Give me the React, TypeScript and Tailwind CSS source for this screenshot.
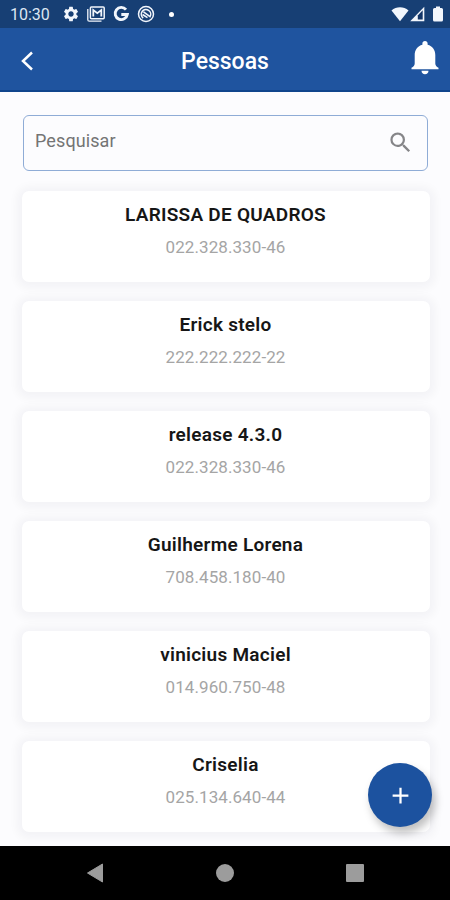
import type { ReactNode } from 'react'
import { MdOutlineAdd, MdSearch, MdSettings } from 'react-icons/md'

type Person = {
  name: string
  document: string
}

const PEOPLE: Person[] = [
  { name: 'LARISSA DE QUADROS', document: '022.328.330-46' },
  { name: 'Erick stelo', document: '222.222.222-22' },
  { name: 'release 4.3.0', document: '022.328.330-46' },
  { name: 'Guilherme Lorena', document: '708.458.180-40' },
  { name: 'vinicius Maciel', document: '014.960.750-48' },
  { name: 'Criselia', document: '025.134.640-44' },
]

const StatusIcon = ({ children }: { children: ReactNode }) => (
  <svg viewBox="0 0 18 18" className="size-[18px]" fill="none">
    {children}
  </svg>
)

const StatusBar = () => (
  <div className="flex h-7 shrink-0 items-center justify-between bg-[#173f74] pl-[10px] pr-[7px] text-[#f2f6fc]">
    <div className="flex items-center">
      <span className="w-[52px] pt-0.5 text-[16px] leading-7 text-[#dce6f3]">
        10:30
      </span>
      <MdSettings className="size-[18px]" />
      <div className="ml-[7px] flex items-center gap-[7px]">
        <StatusIcon>
          <path
            d="M.8 4v10.700c0 1 .5 1.500 1.500 1.500H14.500"
            stroke="currentColor"
            strokeWidth="1.300"
          />
          <rect
            x="3.400"
            y="2"
            width="13.800"
            height="11.800"
            rx="1"
            stroke="currentColor"
            strokeWidth="1.500"
          />
          <path
            d="M6.300 11.500V5l4 3.200 4-3.200v6.500"
            stroke="currentColor"
            strokeWidth="1.800"
          />
        </StatusIcon>
        <StatusIcon>
          <path
            d="M14 4.600A6.100 6.100 0 1 0 15.300 9.500H9.300"
            stroke="currentColor"
            strokeWidth="2.900"
          />
        </StatusIcon>
        <StatusIcon>
          <circle
            cx="9"
            cy="9"
            r="7.500"
            stroke="currentColor"
            strokeWidth="1.500"
          />
          <path
            d="M6.200 13A4.700 4.700 0 1 1 13 11.700L6.500 6.800M5.500 9.500l5 3.200"
            stroke="currentColor"
            strokeWidth="1.600"
          />
        </StatusIcon>
      </div>
      <span className="ml-[14px] size-[5px] rounded-full bg-white" />
    </div>
    <div className="flex items-center">
      <svg viewBox="0 0 18 16" className="h-4 w-[18px]" fill="currentColor">
        <path d="M.5 4.400C5.200.3 12.800.3 17.500 4.400L9 15.200z" />
      </svg>
      <svg viewBox="0 0 15 16" className="ml-px h-4 w-[15px]">
        <path d="M14.300.8V15.200H.2z" fill="currentColor" />
        <path d="M7.800 9.600L12.700 4.300V13.400H7.800z" fill="#123568" />
      </svg>
      <svg
        viewBox="0 0 10 16"
        className="ml-2 h-4 w-[10px]"
        fill="currentColor"
      >
        <path d="M3 .5h4V2h1.500Q10 2 10 3.500V14q0 1.500-1.500 1.500h-7Q0 15.500 0 14V3.500Q0 2 1.500 2H3z" />
      </svg>
    </div>
  </div>
)

const Header = () => (
  <header className="grid h-16 shrink-0 grid-cols-3 items-center border-b-2 border-[#10458c] bg-[#1f549f] text-white">
    <svg
      viewBox="0 0 14 20"
      className="mt-[3px] ml-5 h-5 w-[14px]"
      fill="none"
      stroke="currentColor"
      strokeWidth="2.500"
    >
      <path d="M12 1.500L3 10l9 8.500" />
    </svg>
    <h1 className="pt-[5px] text-center text-[23px] font-medium leading-8">
      Pessoas
    </h1>
    <svg
      viewBox="0 0 28 34"
      className="mr-[11px] mb-[3px] h-[34px] w-7 justify-self-end"
      fill="currentColor"
    >
      <path d="M14 0c1.600 0 2.600 1.100 2.600 2.600v1.100C21.500 5 24.300 9 24.300 14v8.500c0 2 1.200 3.200 3.200 4.300v1.500H.5v-1.500c2-1.100 3.200-2.300 3.200-4.300V14C3.700 9 6.500 5 11.400 3.700V2.600C11.400 1.100 12.400 0 14 0z" />
      <path d="M10.500 29.700h7c0 2-1.500 3.600-3.500 3.600s-3.500-1.600-3.500-3.600z" />
    </svg>
  </header>
)

const PersonCard = ({ name, document }: Person) => (
  <li className="h-[91px] rounded-[7px] bg-white pr-px pt-[11px] text-center shadow-[0_1px_10px_5px_rgba(30,30,50,0.040)]">
    <p className="text-[19px] font-semibold leading-[26px] tracking-[0.26px] text-[#161616]">
      {name}
    </p>
    <p className="mt-[6px] text-[17px] leading-[26px] tracking-[0.08px] text-[#a5a5a5]">
      {document}
    </p>
  </li>
)

const NavigationBar = () => (
  <nav className="grid h-[54px] shrink-0 grid-cols-3 items-center justify-items-center bg-black px-[30px] text-[#9c9c9c]">
    <svg viewBox="0 0 18 20" className="size-5" fill="currentColor">
      <path
        d="M1.500 10L16.500 1v18z"
        stroke="currentColor"
        strokeLinejoin="round"
      />
    </svg>
    <span className="size-[18px] rounded-full bg-[#9c9c9c]" />
    <span className="size-[18px] rounded-[1px] bg-[#9c9c9c]" />
  </nav>
)

export default function App() {
  return (
    <div className="relative flex h-[900px] w-[450px] flex-col overflow-hidden bg-[#fcfcfe] font-[Roboto,sans-serif]">
      <StatusBar />
      <Header />
      <main className="flex-1 overflow-hidden pl-[22px] pr-5 pt-[23px]">
        <label className="ml-[1px] mr-[2px] flex h-14 items-center justify-between rounded-md border-[1.500px] border-[#8facd6] pl-[11px] pr-[13px]">
          <input
            type="text"
            placeholder="Pesquisar"
            className="w-60 pb-[5px] text-[18px] tracking-[0.1px] outline-none placeholder:text-[#747474]"
          />
          <MdSearch className="mb-[2px] size-[27px] text-[#858588]" />
        </label>
        <ul className="mt-5 flex flex-col gap-[19px]">
          {PEOPLE.map((person) => (
            <PersonCard key={person.name} {...person} />
          ))}
        </ul>
      </main>
      <NavigationBar />
      <button
        type="button"
        aria-label="Adicionar"
        className="absolute bottom-[73px] right-[18px] flex size-16 items-center justify-center rounded-full bg-[#1c529f] text-white shadow-[3px_6px_8px_rgba(0,0,0,0.250)]"
      >
        <MdOutlineAdd className="size-[27px]" />
      </button>
    </div>
  )
}
